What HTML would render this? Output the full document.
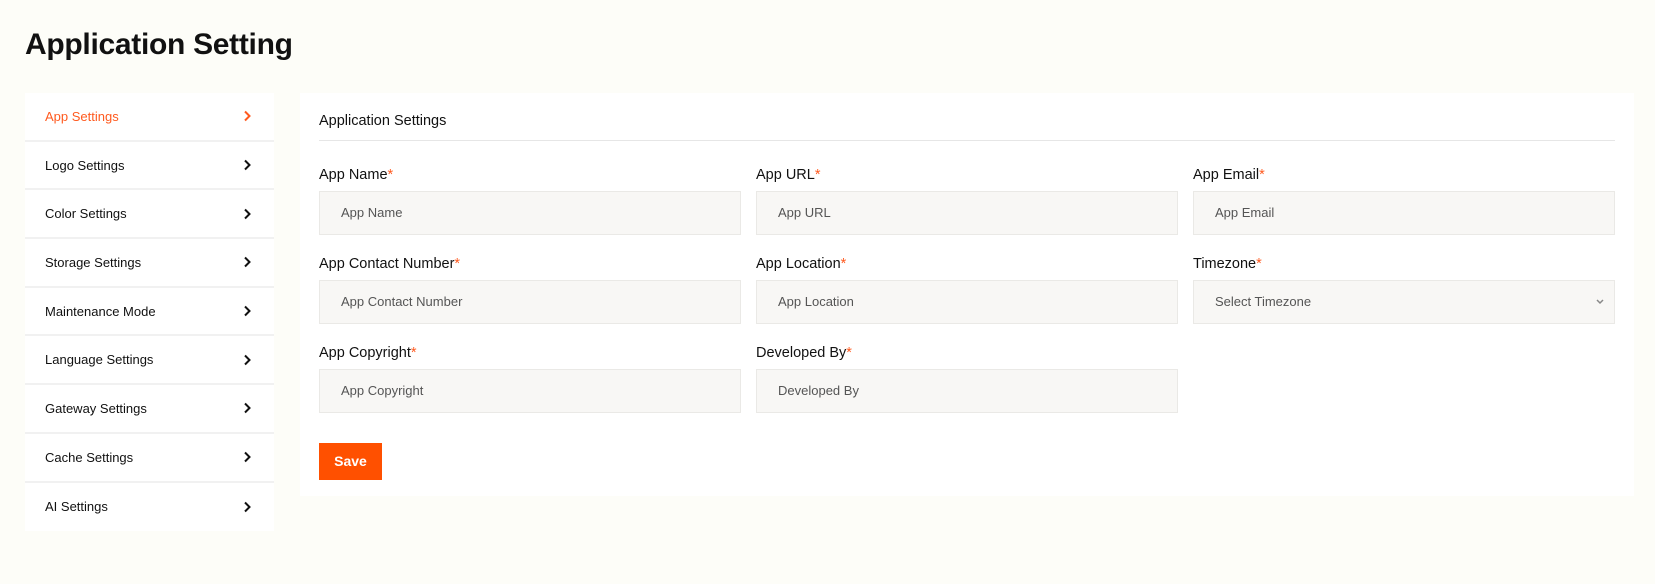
<!DOCTYPE html>
<html><head><style>
*{box-sizing:border-box;margin:0;padding:0}
body{width:1655px;height:584px;background:#fdfdf8;font-family:"Liberation Sans",sans-serif;position:relative;overflow:hidden;color:#111}
h1{position:absolute;left:25px;top:28px;font-size:30px;font-weight:bold;letter-spacing:-0.3px}
.side{position:absolute;left:25px;top:93px;width:249px;background:#fff}
.it{height:48.7px;border-bottom:2px solid #f1f1f1;display:flex;align-items:center;justify-content:space-between;padding:0 22px 0 20px;font-size:13px}
.it:last-child{border-bottom:none}
.it.a{color:#ff5a1f}
.it svg{width:10px;height:12px}
.main{position:absolute;left:300px;top:93px;width:1334px;height:403px;background:#fff}
.hd{position:absolute;left:19px;top:20px;width:1296px;height:28px;border-bottom:1px solid #e6e6e6;font-size:14.5px}
.lb{position:absolute;font-size:14.5px}
.lb b{color:#ff5a1f;font-weight:normal}
.in{position:absolute;width:422px;height:44px;background:#f8f7f5;border:1px solid #eae9e6;font-size:13px;color:#555;padding-left:21px;line-height:42px}
.btn{position:absolute;left:19px;top:350px;width:63px;height:37px;background:#ff5000;color:#fff;font-weight:bold;font-size:14px;text-align:center;line-height:37px}
</style></head><body>
<h1>Application Setting</h1>
<div class="side">
<div class="it a">App Settings<svg viewBox="0 0 10 12"><path d="M3 1.5l4.5 4.5L3 10.5" fill="none" stroke="#ff5a1f" stroke-width="2"/></svg></div>
<div class="it">Logo Settings<svg viewBox="0 0 10 12"><path d="M3 1.5l4.5 4.5L3 10.5" fill="none" stroke="#111" stroke-width="2"/></svg></div>
<div class="it">Color Settings<svg viewBox="0 0 10 12"><path d="M3 1.5l4.5 4.5L3 10.5" fill="none" stroke="#111" stroke-width="2"/></svg></div>
<div class="it">Storage Settings<svg viewBox="0 0 10 12"><path d="M3 1.5l4.5 4.5L3 10.5" fill="none" stroke="#111" stroke-width="2"/></svg></div>
<div class="it">Maintenance Mode<svg viewBox="0 0 10 12"><path d="M3 1.5l4.5 4.5L3 10.5" fill="none" stroke="#111" stroke-width="2"/></svg></div>
<div class="it">Language Settings<svg viewBox="0 0 10 12"><path d="M3 1.5l4.5 4.5L3 10.5" fill="none" stroke="#111" stroke-width="2"/></svg></div>
<div class="it">Gateway Settings<svg viewBox="0 0 10 12"><path d="M3 1.5l4.5 4.5L3 10.5" fill="none" stroke="#111" stroke-width="2"/></svg></div>
<div class="it">Cache Settings<svg viewBox="0 0 10 12"><path d="M3 1.5l4.5 4.5L3 10.5" fill="none" stroke="#111" stroke-width="2"/></svg></div>
<div class="it">AI Settings<svg viewBox="0 0 10 12"><path d="M3 1.5l4.5 4.5L3 10.5" fill="none" stroke="#111" stroke-width="2"/></svg></div>
</div>
<div class="main">
<div class="hd">Application Settings</div>
<div class="lb" style="left:19px;top:74px">App Name<b>*</b></div>
<div class="lb" style="left:456px;top:74px">App URL<b>*</b></div>
<div class="lb" style="left:893px;top:74px">App Email<b>*</b></div>
<div class="in" style="left:19px;top:98px">App Name</div>
<div class="in" style="left:456px;top:98px">App URL</div>
<div class="in" style="left:893px;top:98px">App Email</div>
<div class="lb" style="left:19px;top:163px">App Contact Number<b>*</b></div>
<div class="lb" style="left:456px;top:163px">App Location<b>*</b></div>
<div class="lb" style="left:893px;top:163px">Timezone<b>*</b></div>
<div class="in" style="left:19px;top:187px">App Contact Number</div>
<div class="in" style="left:456px;top:187px">App Location</div>
<div class="in" style="left:893px;top:187px">Select Timezone<svg style="position:absolute;right:10px;top:18px" width="8" height="6" viewBox="0 0 8 6"><path d="M1 1l3 3 3-3" fill="none" stroke="#888" stroke-width="1.5"/></svg></div>
<div class="lb" style="left:19px;top:252px">App Copyright<b>*</b></div>
<div class="lb" style="left:456px;top:252px">Developed By<b>*</b></div>
<div class="in" style="left:19px;top:276px">App Copyright</div>
<div class="in" style="left:456px;top:276px">Developed By</div>
<div class="btn">Save</div>
</div>
</body></html>
